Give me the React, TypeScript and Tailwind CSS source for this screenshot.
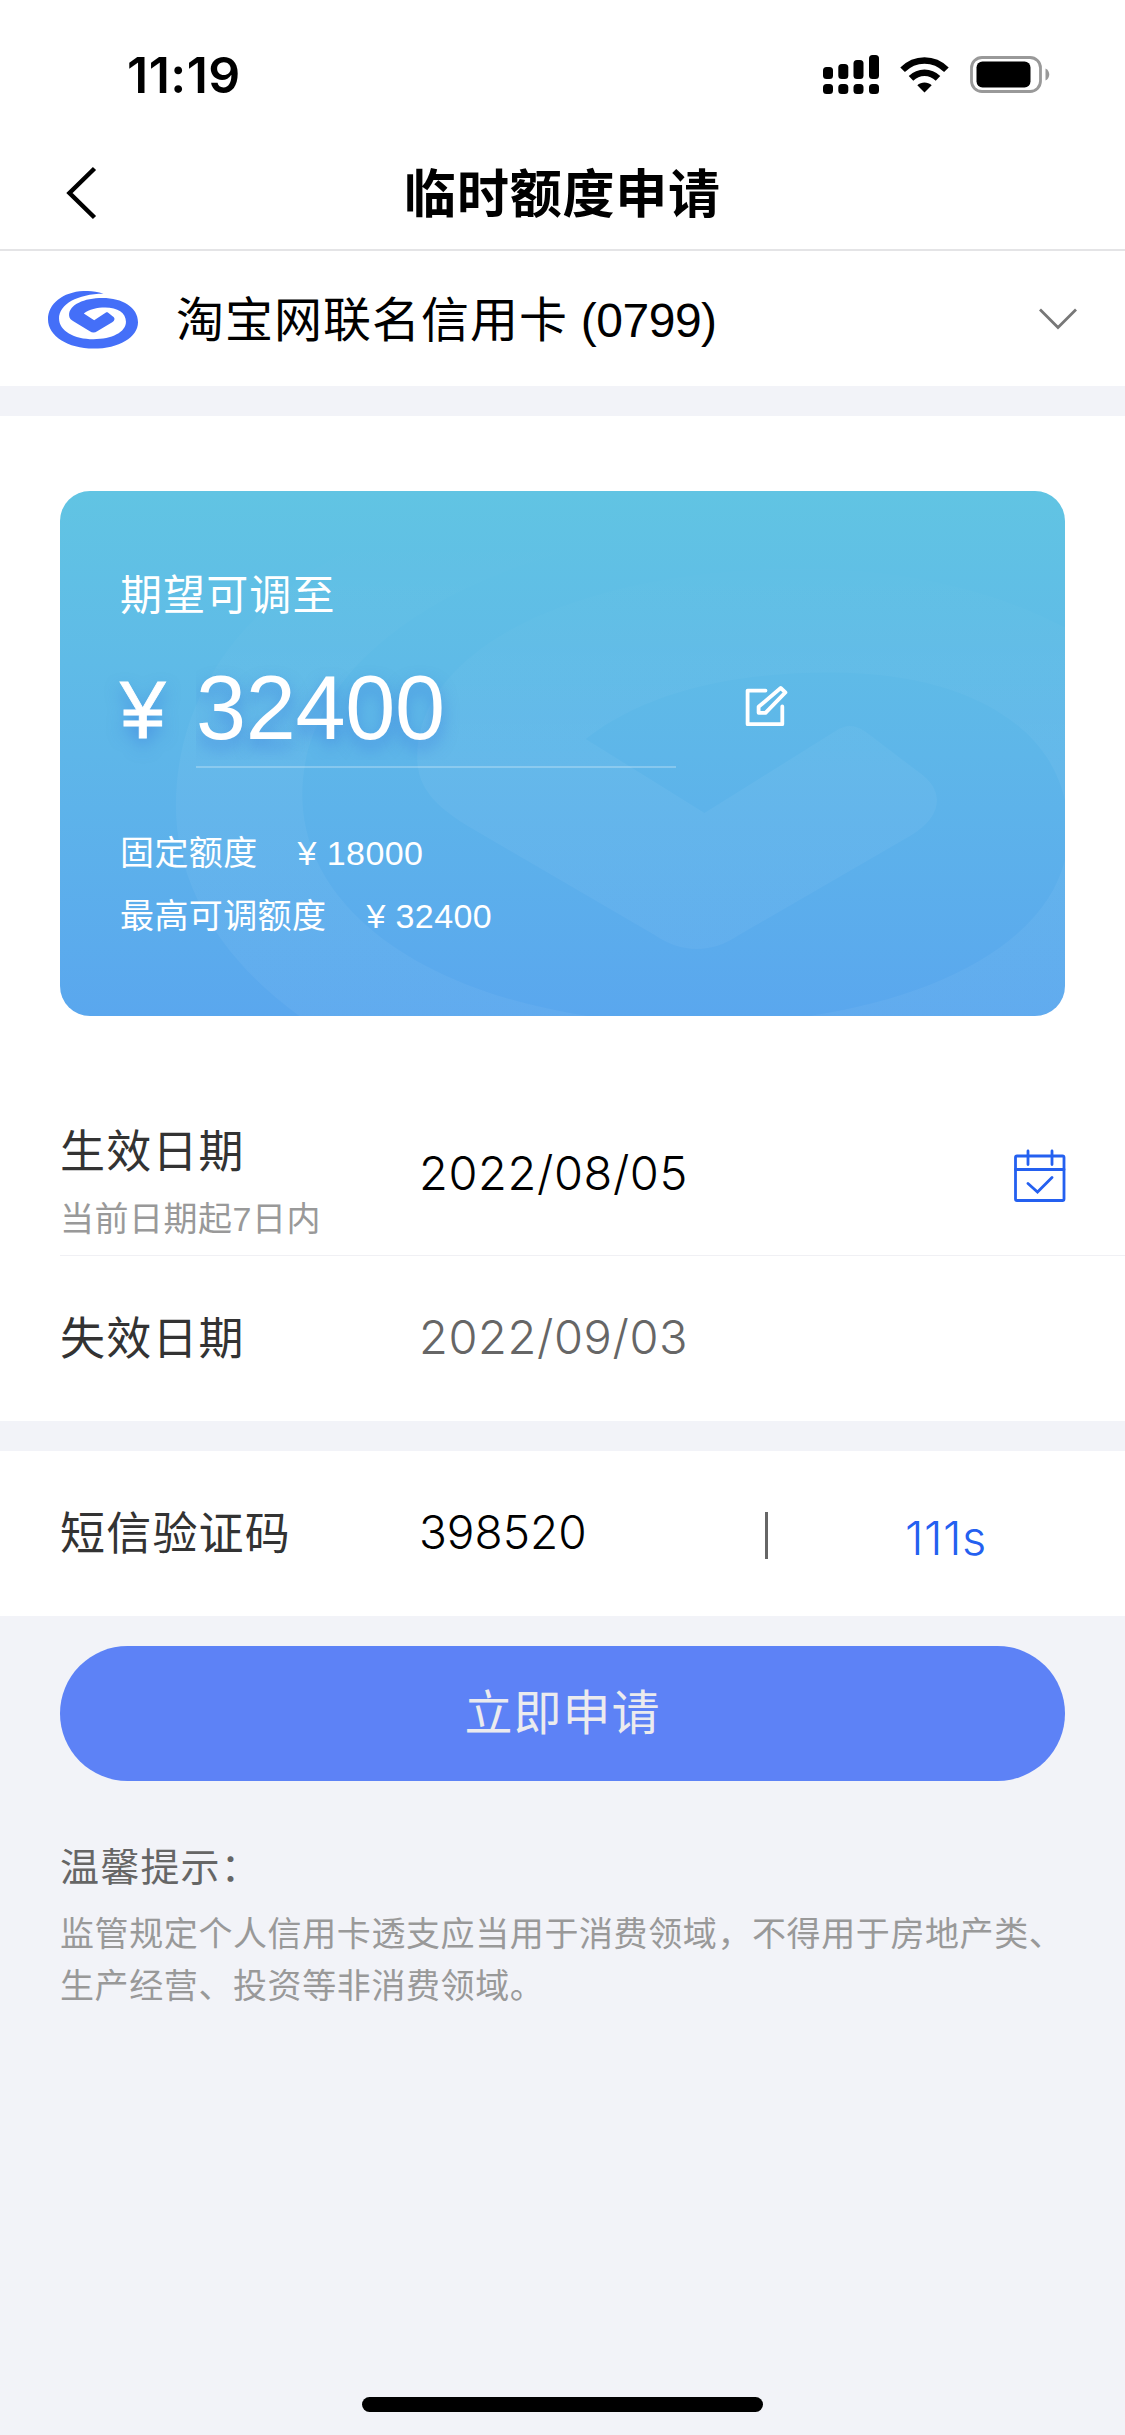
import { useState } from 'react';
import type { ReactNode } from 'react';

// Spiral mark, shared by the bank logo and the card watermark.
const SPIRAL =
  'M190 71C168 64 148 62 130 63C68 66 24 101 24 148C24 197 84 235 160 235C236 235 293 201 293 156C293 112 246 84 187 84C132 84 87 104 87 135C87 144 93 149 101 154L149 183C156 188 164 188 171 183L216 156C224 151 225 144 218 139L204 128C201 126 199 126 196 128L162 150L131 130C147 117 170 112 195 112C232 112 257 128 257 155C257 186 215 207 160 207C102 207 57 182 57 145C57 103 112 71 190 71Z';

function StatusBar() {
  return (
    <div className="flex h-[132px] items-center pt-[18px] pr-[75px] pl-[127px]">
      <span className="font-['Inter',sans-serif] text-[50px] leading-[60px] font-semibold tracking-[0.500px] text-black">
        11:19
      </span>
      <svg className="ml-auto" width="228" height="42" viewBox="0 0 228 42">
        <g fill="#000">
          <rect x="1" y="13" width="10" height="12" rx="3.5" />
          <rect x="16.3" y="10" width="10" height="15" rx="3.5" />
          <rect x="31.5" y="6" width="10" height="19" rx="3.5" />
          <rect x="47" y="1" width="10" height="24" rx="3.5" />
          <rect x="1" y="30" width="10" height="10" rx="3.5" />
          <rect x="16.3" y="30" width="10" height="10" rx="3.5" />
          <rect x="31.5" y="30" width="10" height="10" rx="3.5" />
          <rect x="47" y="30" width="10" height="10" rx="3.5" />
          <path d="M102.5 38.5L95.3 31.2C99.3 27.6 105.7 27.6 109.7 31.2Z" />
        </g>
        <g fill="none" stroke="#000" strokeWidth="6.5">
          <path d="M80.6 15.7C93 3.3 112 3.3 124.4 15.7" />
          <path d="M89 24.4C96.7 16.9 108.3 16.9 116 24.4" />
        </g>
        <rect x="149.5" y="3.5" width="69" height="34" rx="10.5" fill="none" stroke="#999" strokeWidth="2.8" />
        <rect x="154.5" y="7.5" width="54" height="26" rx="6" fill="#000" />
        <path d="M223.5 14.5C228.5 16.5 228.5 24.5 223.5 26.5Z" fill="#999" />
      </svg>
    </div>
  );
}

function NavBar() {
  return (
    <header className="grid h-[119px] grid-cols-[1fr_auto_1fr] items-center border-b-2 border-[#e4e4e6] px-[60px]">
      <button type="button" aria-label="返回" className="pt-[5px]">
        <svg width="40" height="54" viewBox="0 0 40 54" fill="none" stroke="#000" strokeWidth="4.5">
          <path d="M34.5 2.5L9.5 27L34.5 51.5" />
        </svg>
      </button>
      <h1 className="text-[52px] leading-[60px] font-bold tracking-[0.800px] text-black">临时额度申请</h1>
    </header>
  );
}

function CardPicker() {
  return (
    <button type="button" className="flex h-[135px] w-full items-center pr-[47px] pl-12">
      <svg className="mt-[2px]" width="90" height="58" viewBox="24 63 269 173">
        <path d={SPIRAL} fill="#446ff8" />
      </svg>
      <span className="ml-[38px] pt-[5px] font-['Liberation_Sans','Noto_Sans_CJK_SC',sans-serif] text-[48px] leading-[60px] tracking-[-0.500px] text-black">
        <span className="tracking-[1px]">淘宝网联名信用卡</span> (0799)
      </span>
      <svg className="ml-auto" width="40" height="24" viewBox="0 0 40 24" fill="none" stroke="#777" strokeWidth="2.8">
        <path d="M2 2.5L20 20.5L38 2.5" />
      </svg>
    </button>
  );
}

function LimitCard() {
  const [amount, setAmount] = useState('32400');

  return (
    <section className="relative mx-[60px] h-[525px] overflow-hidden rounded-[30px] bg-linear-to-b from-[#61c4e3] via-[#5eb6e9] to-[#5aa7ee] pl-[60px] text-white">
      <svg className="absolute inset-0" width="1005" height="525" viewBox="0 0 1005 525">
        <defs>
          <linearGradient id="mark" gradientUnits="userSpaceOnUse" x1="0" y1="75" x2="0" y2="140">
            <stop offset="0" stopColor="#fff" stopOpacity="0" />
            <stop offset="1" stopColor="#fff" stopOpacity="0.045" />
          </linearGradient>
        </defs>
        <path d={SPIRAL} fill="url(#mark)" transform="translate(24 -233) scale(3.83 3.7)" />
      </svg>
      <div className="relative">
        <p className="pt-[76px] text-[42px] leading-[50px] tracking-[1.100px]">期望可调至</p>
        <div className="mt-[46px] flex font-['Liberation_Sans',sans-serif]">
          <span className="w-[76px] text-[82px] leading-[93px] [-webkit-text-stroke:0.8px_#fff] [text-shadow:0_8px_16px_rgba(50,110,220,0.5)]">
            ¥
          </span>
          <input
            value={amount}
            onChange={(event) => setAmount(event.target.value)}
            aria-label="期望额度"
            className="h-[105px] w-[480px] border-b-2 border-white/25 bg-transparent pb-[13px] text-[90px] leading-[90px] tracking-[-0.300px] outline-none [text-shadow:0_8px_16px_rgba(50,110,220,0.5)]"
          />
          <svg
            className="mt-5 ml-[67px]"
            width="48"
            height="48"
            viewBox="0 0 48 48"
            fill="none"
            stroke="#fff"
            strokeWidth="3.8"
            strokeLinecap="round"
            strokeLinejoin="round"
          >
            <path d="M22.5 7.6H4.6V41.2H39.3V23.5" />
            <path d="M37.7 5L42.4 9.4L22.5 29.8H15.6V23.8Z" />
          </svg>
        </div>
        <dl className="mt-[54px] font-['Liberation_Sans','Noto_Sans_CJK_SC',sans-serif] text-[34px] leading-[63px] tracking-[0.400px]">
          <div className="flex gap-10">
            <dt>固定额度</dt>
            <dd>¥ 18000</dd>
          </div>
          <div className="flex gap-10">
            <dt>最高可调额度</dt>
            <dd>¥ 32400</dd>
          </div>
        </dl>
      </div>
    </section>
  );
}

function FormRow({ label, hint, children }: { label: string; hint?: string; children: ReactNode }) {
  return (
    <div className="ml-[60px] flex h-[165px] items-center">
      <div className={hint ? 'w-[359px] pt-5' : 'w-[359px] pb-[5px]'}>
        <p className="text-[45px] leading-[70px] tracking-[1.200px] text-[#333]">{label}</p>
        {hint && (
          <p className="font-['Liberation_Sans','Noto_Sans_CJK_SC',sans-serif] text-[34px] leading-[70px] tracking-[0.500px] text-[#999]">
            {hint}
          </p>
        )}
      </div>
      {children}
    </div>
  );
}

export default function App() {
  return (
    <main className="min-h-[2435px] w-[1125px] bg-[#f2f3f8] font-['Noto_Sans_CJK_SC',sans-serif]">
      <div className="bg-white">
        <StatusBar />
        <NavBar />
        <CardPicker />
      </div>

      <div className="mt-[30px] bg-white pt-[75px]">
        <LimitCard />
        <div className="mt-[75px]">
          <FormRow label="生效日期" hint="当前日期起7日内">
            <span className="font-['Inter',sans-serif] text-[47px] font-light tracking-[0.600px] text-black">
              2022/08/05
            </span>
            <svg
              className="mt-[5px] mr-[58px] ml-auto"
              width="54"
              height="54"
              viewBox="0 0 54 54"
              fill="none"
              stroke="#2460f0"
              strokeWidth="2.8"
              strokeLinecap="round"
            >
              <rect x="2.5" y="7" width="48.5" height="44.5" rx="1.5" />
              <path d="M2.5 20.5H51M15 2V15.500M39 2V15.500M15 34.500L24.500 43L39 28.500" />
            </svg>
          </FormRow>
          <div className="-mt-px ml-[60px] h-px bg-[#f0f0f4]" />
          <FormRow label="失效日期">
            <span className="pb-[2px] font-['Inter',sans-serif] text-[47px] font-light tracking-[0.600px] text-[#666]">
              2022/09/03
            </span>
          </FormRow>
        </div>
      </div>

      <div className="mt-[30px] bg-white">
        <FormRow label="短信验证码">
          <span className="w-[346px] pb-[3px] font-['Inter',sans-serif] text-[46px] font-light text-black">398520</span>
          <span className="mt-[3px] h-[47px] w-[3px] bg-[#666]" />
          <span className="ml-[137px] pt-[9px] font-['Inter',sans-serif] text-[47px] font-light tracking-[0.500px] text-[#2460f0]">
            111s
          </span>
        </FormRow>
      </div>

      <div className="px-[60px] pt-[30px]">
        <button
          type="button"
          className="h-[135px] w-full rounded-full bg-[#5d82f6] pb-[9px] text-[48px] tracking-[1px] text-[#ebebee]"
        >
          立即申请
        </button>
        <h2 className="mt-[55px] text-[39px] leading-[56px] tracking-[1.200px] text-[#666]">温馨提示：</h2>
        <p className="mt-[14px] text-[34px] leading-[52px] tracking-[0.600px] text-[#999]">
          监管规定个人信用卡透支应当用于消费领域，不得用于房地产类、生产经营、投资等非消费领域。
        </p>
      </div>

      <div className="fixed bottom-[23px] left-[362px] h-[15px] w-[401px] rounded-full bg-black" />
    </main>
  );
}
